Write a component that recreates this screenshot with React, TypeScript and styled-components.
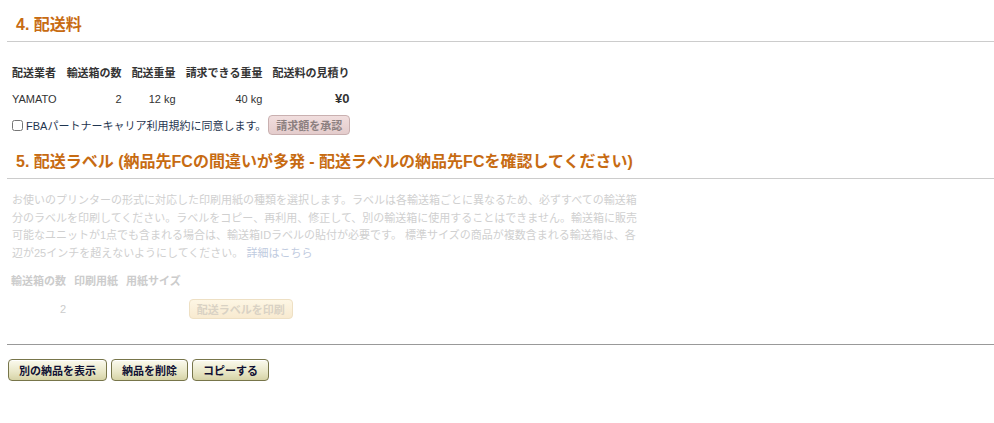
import styled, { createGlobalStyle } from "styled-components";

const GlobalStyle = createGlobalStyle`
  body {
    margin: 0;
    background: #ffffff;
    font-family: Arial, "Liberation Sans", "Noto Sans CJK JP", sans-serif;
    font-size: 11px;
    color: #333333;
  }
`;

const Page = styled.div`
  width: 987px;
  margin-left: 7px;
`;

const Heading = styled.h2<{ $top: number }>`
  margin: 0;
  padding: ${(p) => p.$top}px 0 5px 9px;
  line-height: 22px;
  font-size: 16px;
  font-weight: bold;
  color: #c76b12;
  border-bottom: 1px solid #cccccc;
`;

const Table = styled.table<{ $top: number; $pad: number }>`
  border-collapse: collapse;
  margin: ${(p) => p.$top}px 0 0 0;

  th,
  td {
    padding-left: ${(p) => p.$pad}px;
    padding-right: ${(p) => p.$pad}px;
  }
`;

const Th = styled.th<{ $muted?: boolean }>`
  padding-top: 4px;
  padding-bottom: 4px;
  line-height: 16px;
  font-weight: bold;
  text-align: left;
  white-space: nowrap;
  color: ${(p) => (p.$muted ? "#cccccc" : "#333333")};
`;

const Td = styled.td<{ $right?: boolean; $muted?: boolean; $big?: boolean }>`
  padding-top: 6px;
  padding-bottom: 4px;
  line-height: 16px;
  white-space: nowrap;
  text-align: ${(p) => (p.$right ? "right" : "left")};
  color: ${(p) => (p.$muted ? "#cccccc" : "#333333")};
  font-size: ${(p) => (p.$big ? "13px" : "11px")};
  font-weight: ${(p) => (p.$big ? "bold" : "normal")};
`;

const AgreeRow = styled.div`
  display: flex;
  align-items: center;
  gap: 2px;
  margin: 4px 0 0 3px;
`;

const AgreeLabel = styled.label`
  display: flex;
  align-items: center;
  gap: 3px;
  color: #1f3550;
  font-size: 11px;
`;

const Check = styled.input`
  width: 11px;
  height: 11px;
  margin: 0 0 0 2px;
`;

const GhostButton = styled.button<{ $tone: "pink" | "cream" }>`
  height: 20px;
  padding: 0 7px;
  border-radius: 4px;
  font-family: inherit;
  font-size: 11px;
  font-weight: bold;
  border: 1px solid ${(p) => (p.$tone === "pink" ? "#c9b0b0" : "#eee0c4")};
  background: ${(p) =>
    p.$tone === "pink"
      ? "linear-gradient(#f1dede, #e4cccc)"
      : "linear-gradient(#fdf6e4, #f8ead0)"};
  color: ${(p) => (p.$tone === "pink" ? "#8c8080" : "#d9d2c4")};
`;

const Notice = styled.p`
  margin: 13px 0 0 5px;
  line-height: 17.5px;
  font-size: 11px;
  color: #d0d0d0;
  white-space: nowrap;
`;

const Link = styled.a`
  color: #bfcbe0;
  text-decoration: none;
`;

const Divider = styled.hr`
  margin: 21px 0 0 0;
  border: 0;
  border-top: 1px solid #999999;
`;

const Actions = styled.div`
  display: flex;
  gap: 4px;
  margin: 14px 0 0 1px;
`;

const ActionButton = styled.button`
  height: 22px;
  padding: 0 10px;
  border: 1px solid #77754a;
  border-radius: 4px;
  background: linear-gradient(#fbfaee, #e8e6c6 60%, #d6d3a6);
  font-family: inherit;
  font-size: 11px;
  font-weight: bold;
  color: #111133;
  box-shadow: inset 0 1px 0 #ffffff;
`;

export default function App() {
  return (
    <Page>
      <GlobalStyle />
      <Heading $top={14}>4. 配送料</Heading>
      <Table $top={19} $pad={5}>
        <thead>
          <tr>
            <Th>配送業者</Th>
            <Th>輸送箱の数</Th>
            <Th>配送重量</Th>
            <Th>請求できる重量</Th>
            <Th>配送料の見積り</Th>
          </tr>
        </thead>
        <tbody>
          <tr>
            <Td>YAMATO</Td>
            <Td $right>2</Td>
            <Td $right>12 kg</Td>
            <Td $right>40 kg</Td>
            <Td $right $big>¥0</Td>
          </tr>
        </tbody>
      </Table>
      <AgreeRow>
        <AgreeLabel>
          <Check type="checkbox" />
          FBAパートナーキャリア利用規約に同意します。
        </AgreeLabel>
        <GhostButton $tone="pink" disabled>請求額を承認</GhostButton>
      </AgreeRow>
      <Heading $top={16}>
        5. 配送ラベル (納品先FCの間違いが多発 - 配送ラベルの納品先FCを確認してください)
      </Heading>
      <Notice>
        お使いのプリンターの形式に対応した印刷用紙の種類を選択します。ラベルは各輸送箱ごとに異なるため、必ずすべての輸送箱
        <br />
        分のラベルを印刷してください。ラベルをコピー、再利用、修正して、別の輸送箱に使用することはできません。輸送箱に販売
        <br />
        可能なユニットが1点でも含まれる場合は、輸送箱IDラベルの貼付が必要です。 標準サイズの商品が複数含まれる輸送箱は、各
        <br />
        辺が25インチを超えないようにしてください。 <Link href="#">詳細はこちら</Link>
      </Notice>
      <Table $top={7} $pad={4}>
        <thead>
          <tr>
            <Th $muted>輸送箱の数</Th>
            <Th $muted>印刷用紙</Th>
            <Th $muted>用紙サイズ</Th>
            <Th />
          </tr>
        </thead>
        <tbody>
          <tr>
            <Td $right $muted>2</Td>
            <Td />
            <Td />
            <Td>
              <GhostButton $tone="cream" disabled>配送ラベルを印刷</GhostButton>
            </Td>
          </tr>
        </tbody>
      </Table>
      <Divider />
      <Actions>
        <ActionButton>別の納品を表示</ActionButton>
        <ActionButton>納品を削除</ActionButton>
        <ActionButton>コピーする</ActionButton>
      </Actions>
    </Page>
  );
}
